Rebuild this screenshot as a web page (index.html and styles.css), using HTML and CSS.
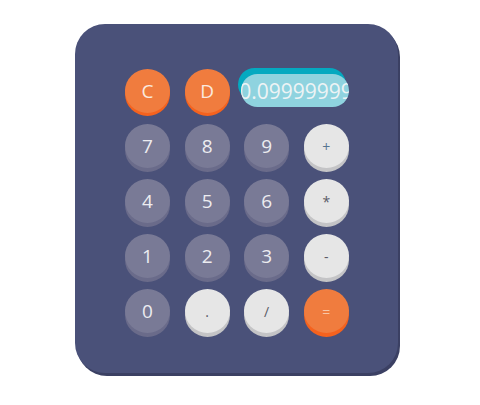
FILE: index.html
```html
<!DOCTYPE html>
<html>
<head>
<meta charset="utf-8">
<link rel="stylesheet" href="styles.css">
</head>
<body>
<div class="card">
  <div class="grid">
    <div class="btn orange">C</div>
    <div class="btn orange">D</div>
    <div class="display"><span class="value">0.09999999</span></div>
    <div class="btn grey">7</div>
    <div class="btn grey">8</div>
    <div class="btn grey">9</div>
    <div class="btn white op plus">+</div>
    <div class="btn grey">4</div>
    <div class="btn grey">5</div>
    <div class="btn grey">6</div>
    <div class="btn white op">*</div>
    <div class="btn grey">1</div>
    <div class="btn grey">2</div>
    <div class="btn grey">3</div>
    <div class="btn white op">-</div>
    <div class="btn grey">0</div>
    <div class="btn white op">.</div>
    <div class="btn white op">/</div>
    <div class="btn orange op eq">=</div>
  </div>
</div>
</body>
</html>
```
FILE: styles.css
```css
html, body {
  margin: 0;
  padding: 0;
  background: #ffffff;
}
body {
  width: 480px;
  height: 405px;
  font-family: "Open Sans", "DejaVu Sans", sans-serif;
  padding-top: 24px;
  padding-left: 75px;
  box-sizing: border-box;
}
.card {
  width: 323px;
  height: 349px;
  background: #4a5179;
  border-radius: 30px;
  box-shadow: 2px 3px 0 #3b4063;
  box-sizing: border-box;
  padding: 45px 49px 0 50px;
}
.grid {
  display: grid;
  grid-template-columns: repeat(4, 45px);
  grid-auto-rows: 45px;
  column-gap: 14.6px;
  row-gap: 10px;
}
.btn {
  width: 45px;
  height: 44px;
  border-radius: 50%;
  display: flex;
  align-items: center;
  justify-content: center;
  font-size: 19px;
  color: #ececf0;
  box-sizing: border-box;
}
.grey {
  background: #797a96;
  box-shadow: 0 4px 0 #6a6b8a;
}
.white {
  background: #e6e6e6;
  box-shadow: 0 4px 0 #c4c4c6;
  color: #5b5b66;
}
.orange {
  background: #f07c3e;
  box-shadow: 0 3px 0 #f5621e;
  color: #fbe9de;
}
.op {
  font-size: 14px;
}
.plus {
  color: #557590;
}
.eq {
  color: #f8c7a6;
  box-shadow: 0 4px 0 #f5621e;
}
.display {
  grid-column: 3 / span 2;
  align-self: center;
  margin-left: -3px;
  margin-top: -2px;
  height: 33px;
  border-radius: 17px;
  background: #8fd3df;
  box-shadow: -3px -6px 0 #04a9c0;
  overflow: hidden;
  display: flex;
  align-items: center;
  white-space: nowrap;
}
.value {
  font-size: 21px;
  color: #eef3f5;
  margin-left: -2px;
}
```
